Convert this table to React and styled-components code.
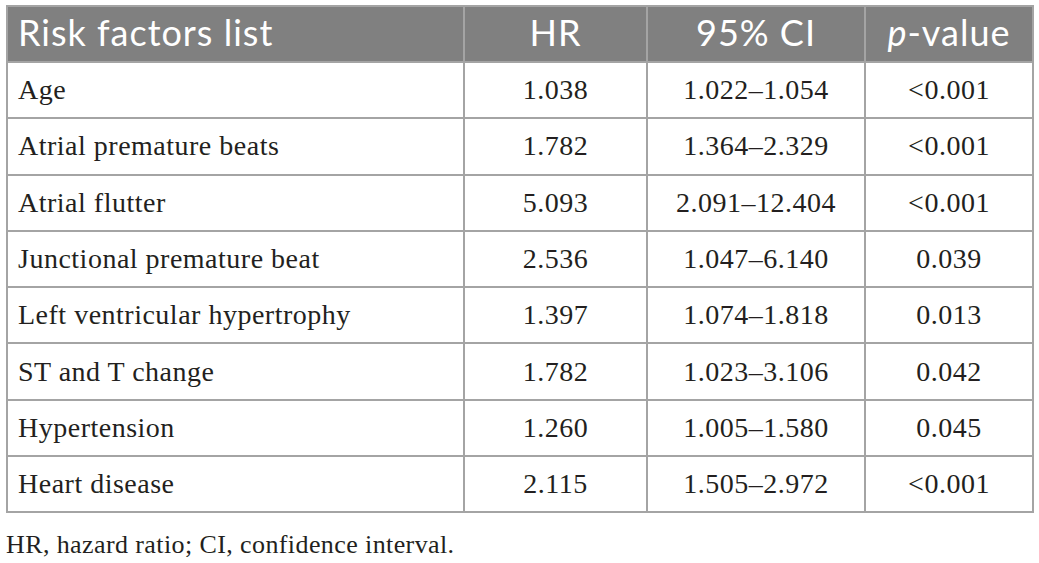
import React from 'react';
import styled, {createGlobalStyle} from 'styled-components';

const GlobalStyle = createGlobalStyle`
    body {
        margin: 0;
        background: #ffffff;
    }
`;

const Page = styled.div`
    padding: 5px 5px 0 6px;
    width: 1039px;
    box-sizing: border-box;
`;

const Table = styled.table`
    border-collapse: collapse;
    width: 1027px;
    table-layout: fixed;
    border: 2px solid #a4a4a4;
`;

const HeadCell = styled.th`
    background: #808080;
    color: #ffffff;
    font-family: Lato, "Open Sans", sans-serif;
    font-weight: 400;
    font-size: 36px;
    letter-spacing: 1px;
    height: 56px;
    padding: 0 0 4px 0;
    border: 2px solid #a4a4a4;
    text-align: ${p => (p.$left ? 'left' : 'center')};
    padding-left: ${p => (p.$left ? '10px' : '0')};
    box-sizing: border-box;
    vertical-align: middle;
    line-height: 1;
`;

const Cell = styled.td`
    font-family: "Liberation Serif", "Times New Roman", serif;
    font-size: 28px;
    letter-spacing: 0.5px;
    color: #231f20;
    height: 56.3px;
    padding: 0;
    border: 2px solid #a4a4a4;
    text-align: ${p => (p.$left ? 'left' : 'center')};
    padding-left: ${p => (p.$left ? '10px' : '0')};
    box-sizing: border-box;
    vertical-align: middle;
`;

const Note = styled.p`
    margin: 17px 0 0 0;
    font-family: "Liberation Serif", "Times New Roman", serif;
    font-size: 26px;
    letter-spacing: 0.4px;
    color: #231f20;
`;

const rows = [
    ['Age', '1.038', '1.022–1.054', '<0.001'],
    ['Atrial premature beats', '1.782', '1.364–2.329', '<0.001'],
    ['Atrial flutter', '5.093', '2.091–12.404', '<0.001'],
    ['Junctional premature beat', '2.536', '1.047–6.140', '0.039'],
    ['Left ventricular hypertrophy', '1.397', '1.074–1.818', '0.013'],
    ['ST and T change', '1.782', '1.023–3.106', '0.042'],
    ['Hypertension', '1.260', '1.005–1.580', '0.045'],
    ['Heart disease', '2.115', '1.505–2.972', '<0.001'],
];

export default function App() {
    return (
        <Page>
            <GlobalStyle/>
            <Table>
                <colgroup>
                    <col style={{width: 457}}/>
                    <col style={{width: 183}}/>
                    <col style={{width: 218}}/>
                    <col style={{width: 168}}/>
                </colgroup>
                <thead>
                <tr>
                    <HeadCell $left>Risk factors list</HeadCell>
                    <HeadCell>HR</HeadCell>
                    <HeadCell>95% CI</HeadCell>
                    <HeadCell><i>p</i>-value</HeadCell>
                </tr>
                </thead>
                <tbody>
                {rows.map(r => (
                    <tr key={r[0]}>
                        <Cell $left>{r[0]}</Cell>
                        <Cell>{r[1]}</Cell>
                        <Cell>{r[2]}</Cell>
                        <Cell>{r[3]}</Cell>
                    </tr>
                ))}
                </tbody>
            </Table>
            <Note>HR, hazard ratio; CI, confidence interval.</Note>
        </Page>
    );
}
